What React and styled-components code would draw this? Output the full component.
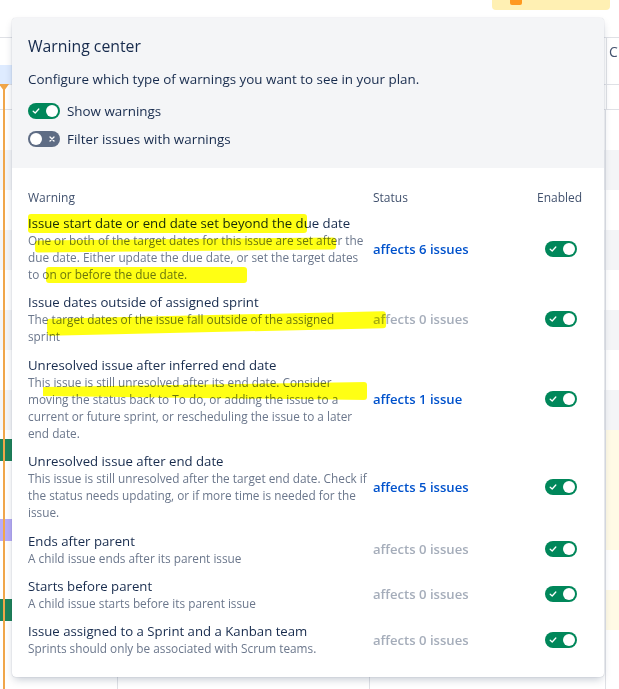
import React from 'react';
import styled, { createGlobalStyle } from 'styled-components';

const GlobalStyle = createGlobalStyle`
  * { box-sizing: border-box; }
  html, body {
    margin: 0;
    padding: 0;
    background: #ffffff;
    font-family: "Open Sans", "Noto Sans", sans-serif;
    color: #172b4d;
  }
`;

const Page = styled.div`
  position: relative;
  width: 619px;
  height: 689px;
  overflow: hidden;
  background: #ffffff;
`;

/* ---------- plan in the background ---------- */

const TopBar = styled.div`
  height: 37px;
  display: flex;
  justify-content: flex-end;
  padding-right: 9px;
`;

const WarnButton = styled.div`
  width: 118px;
  height: 10px;
  background: #fff0b3;
  border-radius: 0 0 4px 4px;
  display: flex;
  align-items: flex-start;
  padding-left: 18px;
`;

const WarnIcon = styled.span`
  width: 12px;
  height: 5px;
  background: #ff991f;
  border-radius: 0 0 2px 2px;
`;

const HeaderBand = styled.div`
  height: ${p => p.$h}px;
  border-top: ${p => (p.$top ? '1px solid #dfe1e6' : 'none')};
  border-bottom: ${p => (p.$bottom ? '1px solid #dfe1e6' : 'none')};
  display: grid;
  grid-template-columns: 12px 594px 1fr;
`;

const HeaderCell = styled.div`
  border-left: ${p => (p.$edge ? '1px solid #dfe1e6' : 'none')};
  background: ${p => (p.$tint ? '#deebff' : 'transparent')};
  font-size: 14px;
  color: #42526e;
  padding: 4px 0 0 2px;
  white-space: nowrap;
  overflow: hidden;
`;

const PlanRow = styled.div`
  height: 40px;
  display: grid;
  grid-template-columns: 118px 252px 236px 1fr;
  background: ${p => (p.$tone === 'gray' ? '#f4f5f7' : '#ffffff')};
`;

const PlanCell = styled.div`
  border-right: 1px solid #dfe1e6;
  display: flex;
  align-items: center;
  background: ${p => (p.$warn ? '#fffae6' : 'transparent')};
  &:last-child { border-right: none; }
`;

const Bar = styled.div`
  height: 22px;
  width: 40px;
  background: ${p => p.$color};
`;

const TodayLine = styled.div`
  position: absolute;
  left: 3px;
  top: 84px;
  bottom: 0;
  width: 2px;
  background: #f0a64a;
  &::before {
    content: '';
    position: absolute;
    top: 0;
    left: -4px;
    border-left: 5px solid transparent;
    border-right: 5px solid transparent;
    border-top: 7px solid #f0a64a;
  }
`;

/* ---------- warning center dialog ---------- */

const Dialog = styled.div`
  position: absolute;
  left: 12px;
  top: 18px;
  width: 592px;
  height: 659px;
  background: #ffffff;
  border-radius: 4px;
  overflow: hidden;
  box-shadow: 0 4px 8px -2px rgba(9, 30, 66, 0.25), 0 0 1px rgba(9, 30, 66, 0.31);
`;

const Intro = styled.div`
  background: #f4f5f7;
  padding: 18px 16px 17px;
  display: flex;
  flex-direction: column;
`;

const Title = styled.h2`
  margin: 0;
  font-size: 15.8px;
  line-height: 20px;
  font-weight: 500;
  color: #172b4d;
`;

const Lead = styled.p`
  margin: 13px 0 10px;
  font-size: 13.4px;
  line-height: 20px;
  color: #172b4d;
`;

const Options = styled.div`
  display: flex;
  flex-direction: column;
  gap: 4px;
`;

const Option = styled.label`
  display: flex;
  align-items: center;
  gap: 7px;
  height: 24px;
  font-size: 13.4px;
  color: #172b4d;
`;

const Track = styled.span`
  display: inline-flex;
  align-items: center;
  justify-content: space-between;
  flex-direction: ${p => (p.$on ? 'row' : 'row-reverse')};
  width: 32px;
  height: 16px;
  padding: ${p => (p.$on ? '0 2px 0 4px' : '0 4px 0 2px')};
  border-radius: 8px;
  background: ${p => (p.$on ? '#00875a' : '#5e6c84')};
  flex-shrink: 0;
`;

const Knob = styled.span`
  width: 12px;
  height: 12px;
  border-radius: 50%;
  background: #ffffff;
`;

const Toggle = ({ on }) => (
  <Track $on={on}>
    {on ? (
      <svg width="8" height="8" viewBox="0 0 8 8">
        <path d="M1.2 4.2 L3.2 6 L6.8 2" fill="none" stroke="#fff" strokeWidth="1.3" strokeLinecap="round" strokeLinejoin="round" />
      </svg>
    ) : (
      <svg width="8" height="8" viewBox="0 0 8 8">
        <path d="M2 2 L6 6 M6 2 L2 6" fill="none" stroke="#fff" strokeWidth="1.3" strokeLinecap="round" />
      </svg>
    )}
    <Knob />
  </Track>
);

const Table = styled.div`
  padding: 22px 23px 0 16px;
`;

const Grid = styled.div`
  display: grid;
  grid-template-columns: 341px 1fr 44px;
  column-gap: 4px;
  align-items: center;
  padding: ${p => (p.$head ? '0 0 3px' : '5px 0 5.4px')};
`;

const HeadCell = styled.div`
  font-size: 12px;
  line-height: 16px;
  color: #42526e;
  font-weight: 500;
`;

const WarningText = styled.div`
  display: flex;
  flex-direction: column;
  max-width: 339px;
`;

const WarningTitle = styled.div`
  font-size: 13.2px;
  line-height: 18px;
  color: #172b4d;
`;

const WarningDesc = styled.div`
  font-size: 11.8px;
  line-height: 17px;
  color: #6b778c;
`;

const Status = styled.div`
  font-size: 13.1px;
  font-weight: 600;
  color: ${p => (p.$count > 0 ? '#0052cc' : '#a5adba')};
`;

const EnabledCell = styled.div`
  display: flex;
  justify-content: flex-end;
  padding-right: 4px;
`;

const Marker = styled.span`
  position: absolute;
  background: #ffff00;
  mix-blend-mode: multiply;
  opacity: 0.92;
  border-radius: 3px;
  pointer-events: none;
`;

const warnings = [
  {
    title: 'Issue start date or end date set beyond the due date',
    desc: 'One or both of the target dates for this issue are set after the due date. Either update the due date, or set the target dates to on or before the due date.',
    count: 6,
  },
  {
    title: 'Issue dates outside of assigned sprint',
    desc: 'The target dates of the issue fall outside of the assigned sprint',
    count: 0,
  },
  {
    title: 'Unresolved issue after inferred end date',
    desc: 'This issue is still unresolved after its end date. Consider moving the status back to To do, or adding the issue to a current or future sprint, or rescheduling the issue to a later end date.',
    count: 1,
  },
  {
    title: 'Unresolved issue after end date',
    desc: 'This issue is still unresolved after the target end date. Check if the status needs updating, or if more time is needed for the issue.',
    count: 5,
  },
  { title: 'Ends after parent', desc: 'A child issue ends after its parent issue', count: 0 },
  { title: 'Starts before parent', desc: 'A child issue starts before its parent issue', count: 0 },
  {
    title: 'Issue assigned to a Sprint and a Kanban team',
    desc: 'Sprints should only be associated with Scrum teams.',
    count: 0,
  },
];

const planRows = [
  { tone: 'white' }, { tone: 'gray' }, { tone: 'white' }, { tone: 'gray' },
  { tone: 'white' }, { tone: 'gray' }, { tone: 'white' }, { tone: 'gray' },
  { tone: 'white', bar: '#1f845a', warn: true }, { tone: 'white', warn: true },
  { tone: 'white', bar: '#b8acf6', warn: true }, { tone: 'white' },
  { tone: 'white', bar: '#1f845a', warn: true }, { tone: 'white' }, { tone: 'white' },
];

const affects = n => `affects ${n} ${n === 1 ? 'issue' : 'issues'}`;

const App = () => (
  <Page>
    <GlobalStyle />
    <TopBar>
      <WarnButton>
        <WarnIcon />
      </WarnButton>
    </TopBar>
    <HeaderBand $h={28} $top>
      <HeaderCell />
      <HeaderCell />
      <HeaderCell $edge>C</HeaderCell>
    </HeaderBand>
    <HeaderBand $h={20} $bottom>
      <HeaderCell $tint />
      <HeaderCell />
      <HeaderCell $edge />
    </HeaderBand>
    <HeaderBand $h={25} $bottom>
      <HeaderCell />
      <HeaderCell />
      <HeaderCell $edge />
    </HeaderBand>
    {planRows.map((r, i) => (
      <PlanRow key={i} $tone={r.tone}>
        <PlanCell>{r.bar && <Bar $color={r.bar} />}</PlanCell>
        <PlanCell />
        <PlanCell />
        <PlanCell $warn={r.warn} />
      </PlanRow>
    ))}
    <TodayLine />

    <Dialog>
      <Intro>
        <Title>Warning center</Title>
        <Lead>Configure which type of warnings you want to see in your plan.</Lead>
        <Options>
          <Option>
            <Toggle on />
            Show warnings
          </Option>
          <Option>
            <Toggle on={false} />
            Filter issues with warnings
          </Option>
        </Options>
      </Intro>
      <Table>
        <Grid $head>
          <HeadCell>Warning</HeadCell>
          <HeadCell>Status</HeadCell>
          <HeadCell>Enabled</HeadCell>
        </Grid>
        {warnings.map(w => (
          <Grid key={w.title}>
            <WarningText>
              <WarningTitle>{w.title}</WarningTitle>
              <WarningDesc>{w.desc}</WarningDesc>
            </WarningText>
            <Status $count={w.count}>{affects(w.count)}</Status>
            <EnabledCell>
              <Toggle on />
            </EnabledCell>
          </Grid>
        ))}
      </Table>

      <Marker style={{ left: 16, top: 196, width: 279, height: 19 }} />
      <Marker style={{ left: 23, top: 221, width: 301, height: 12, transform: 'rotate(-0.6deg)' }} />
      <Marker style={{ left: 34, top: 249, width: 201, height: 16 }} />
      <Marker style={{ left: 35, top: 297, width: 339, height: 17, transform: 'rotate(-1.3deg)' }} />
      <Marker style={{ left: 31, top: 364, width: 324, height: 18, clipPath: 'polygon(0 28%, 100% 0, 100% 100%, 0 78%)' }} />
    </Dialog>
  </Page>
);

export default App;
